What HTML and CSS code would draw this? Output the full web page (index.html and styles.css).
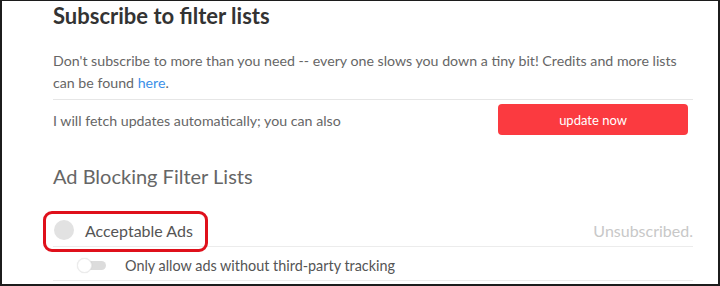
FILE: index.html
```html
<!DOCTYPE html>
<html lang="en">

<head>
  <meta charset="UTF-8">
  <meta name="viewport" content="width=device-width, initial-scale=1.0">
  <title>Filter lists</title>
  <link rel="stylesheet" href="styles.css">
</head>

<body>
  <div class="frame">
    <div class="content">
      <h1 class="title">Subscribe to filter lists</h1>
      <p class="intro">
        Don't subscribe to more than you need -- every one slows you down a tiny bit! Credits and more lists
        can be found <a href="#">here</a>.
      </p>

      <div class="update-row">
        <span>I will fetch updates automatically; you can also</span>
        <button class="update-btn">update now</button>
      </div>

      <h2 class="subtitle">Ad Blocking Filter Lists</h2>

      <div class="list-row">
        <div class="list-name">
          <span class="dot"></span>
          <span>Acceptable Ads</span>
          <!-- annotation box -->
          <span class="highlight"></span>
        </div>
        <span class="status">Unsubscribed.</span>
      </div>

      <div class="option-row">
        <span class="toggle"><span class="knob"></span></span>
        <span>Only allow ads without third-party tracking</span>
      </div>
    </div>
  </div>
</body>

</html>
```

FILE: styles.css
```css
html,
body {
  margin: 0;
  padding: 0;
  background: #fff;
}

.frame {
  width: 720px;
  height: 286px;
  box-sizing: border-box;
  border: 2px solid #1c1c1c;
  border-top-width: 1px;
  overflow: hidden;
  font-family: Lato, "Open Sans", sans-serif;
}

.content {
  width: 640px;
  margin-left: 51px;
}

.title {
  margin: 0;
  padding-top: 1px;
  font-size: 22px;
  line-height: 28px;
  font-weight: 700;
  color: #333;
}

.intro {
  margin: 20px 0 0;
  font-size: 14.2px;
  line-height: 22px;
  color: #666;
  padding-bottom: 5px;
  border-bottom: 1px solid #e6e6e6;
}

.intro a {
  color: #3b8fe8;
  text-decoration: none;
}

.update-row {
  display: flex;
  justify-content: space-between;
  align-items: center;
  padding-top: 4px;
  font-size: 14.2px;
  color: #666;
}

.update-row span {
  padding-top: 2px;
}

.update-btn {
  width: 190px;
  height: 31px;
  margin-right: 5px;
  padding-top: 2px;
  border: none;
  border-radius: 4px;
  background: #fb3a40;
  color: #fff;
  font-family: inherit;
  font-size: 13px;
}

.subtitle {
  margin: 28px 0 0;
  font-size: 20px;
  line-height: 26px;
  font-weight: 400;
  color: #666;
}

.list-row {
  display: flex;
  justify-content: space-between;
  align-items: center;
  margin-top: 25px;
  height: 32px;
  border-bottom: 1px solid #ececec;
}

.list-name {
  position: relative;
  display: flex;
  align-items: center;
  gap: 11px;
  font-size: 16px;
  color: #555;
}

.dot {
  width: 20px;
  height: 20px;
  margin-left: 1px;
  border-radius: 50%;
  background: #e2e2e2;
}

.highlight {
  position: absolute;
  left: -10px;
  top: -9px;
  width: 159px;
  height: 35px;
  border: 3px solid #df101b;
  border-radius: 9px;
}

.status {
  font-size: 16px;
  color: #c8c8c8;
}

.option-row {
  display: flex;
  align-items: center;
  gap: 19px;
  height: 30px;
  padding: 3px 0 0 25px;
  font-size: 14.4px;
  color: #555;
  border-bottom: 1px solid #ececec;
}

.toggle {
  position: relative;
  width: 28px;
  height: 9px;
  border-radius: 5px;
  background: #dcdcdc;
}

.knob {
  position: absolute;
  left: -1px;
  top: -3px;
  width: 13px;
  height: 13px;
  border-radius: 50%;
  background: #fff;
  border: 1px solid #ececec;
  box-shadow: 0 0 1px rgba(0, 0, 0, 0.15);
}
```
